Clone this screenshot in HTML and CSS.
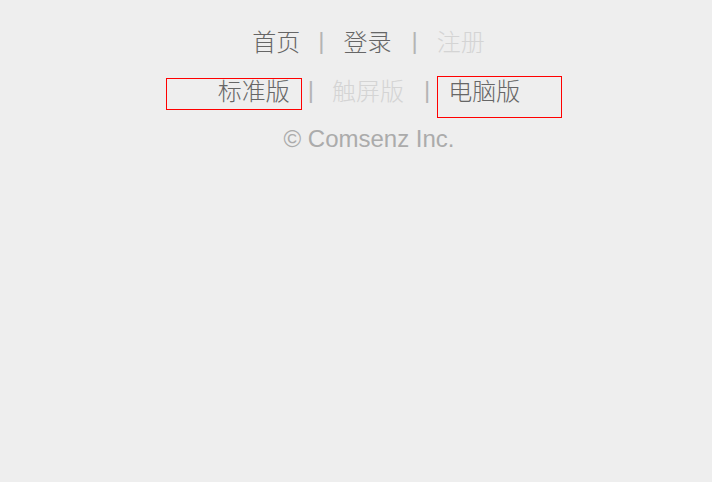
FILE: index.html
```html
<!DOCTYPE html>
<html lang="zh-CN">
<head>
<meta charset="utf-8">
<title>Comsenz</title>
<link rel="stylesheet" href="styles.css">
</head>
<body>
<div class="footer">
  <nav class="links row1">
    <a class="link dark" href="#">首页</a>
    <span class="sep s1">|</span>
    <a class="link dark" href="#">登录</a>
    <span class="sep s2">|</span>
    <span class="link light">注册</span>
  </nav>
  <nav class="links row2">
    <a class="link dark box box-std" href="#">标准版</a>
    <span class="sep s3">|</span>
    <span class="link light mid">触屏版</span>
    <span class="sep s4">|</span>
    <a class="link dark box box-pc" href="#">电脑版</a>
  </nav>
  <p class="copy">© Comsenz Inc.</p>
</div>
</body>
</html>
```
FILE: styles.css
```css
html, body {
  margin: 0;
  padding: 0;
  background: #eeeeee;
}
body {
  width: 712px;
  height: 482px;
  font-family: "Noto Sans CJK SC", "Noto Sans", sans-serif;
}
.footer {
  display: flex;
  flex-direction: column;
  padding-top: 29px;
}
.links {
  display: flex;
  justify-content: center;
  align-items: flex-start;
}
.row1 {
  padding-left: 25px;
}
.row2 {
  margin-top: 23px;
  padding-left: 16px;
}
.link {
  font-size: 24px;
  line-height: 24px;
  font-weight: 300;
  text-decoration: none;
  white-space: nowrap;
}
.dark { color: #666666; }
.light { color: #d4d4d4; }
.mid { padding-top: 2px; }
.sep {
  font-family: "Liberation Sans", sans-serif;
  font-size: 24px;
  line-height: 24px;
  color: #b4b4b4;
}
.s1 { margin: 0 19px 0 18px; }
.s2 { margin: 0 19px 0 20px; }
.s3 { margin: 0 18px 0 6px; padding-top: 2px; }
.s4 { margin: 0 7px 0 20px; padding-top: 2px; }
.box {
  box-sizing: border-box;
  border: 1px solid #ff0000;
}
.box-std {
  width: 136px;
  height: 32px;
  margin-top: 2px;
  line-height: 22px;
  text-align: right;
  padding-right: 11px;
}
.box-pc {
  width: 125px;
  height: 42px;
  padding-top: 1px;
  padding-left: 10px;
}
.copy {
  margin: 9px 0 0;
  padding-left: 26px;
  text-align: center;
  font-family: "Liberation Sans", Arial, sans-serif;
  font-size: 24px;
  line-height: 24px;
  color: #ababab;
}
```
